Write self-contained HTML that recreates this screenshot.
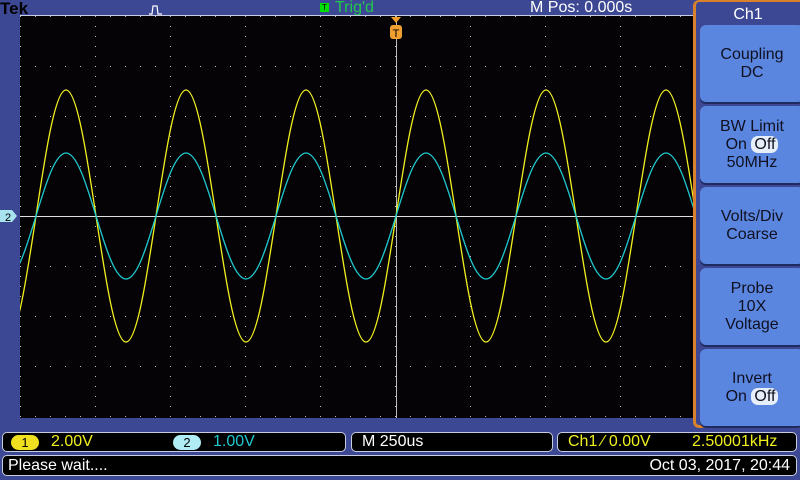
<!DOCTYPE html>
<html><head><style>
body{margin:0;width:800px;height:480px;background:#3d4894;overflow:hidden;position:relative;font-family:"Liberation Sans",sans-serif}
.t{position:absolute;white-space:nowrap}
.menu{position:absolute;left:693px;top:0;width:107px;height:428px;background:#3d4894;border-left:3px solid #d9822b;border-bottom:3px solid #d9822b;border-top:2px solid #d9822b;border-radius:6px 0 0 6px;box-sizing:border-box}
.btn{position:absolute;left:4px;width:104px;background:#5a86e0;border-radius:6px;color:#101020;font-size:16px;text-align:center;display:flex;flex-direction:column;justify-content:center;line-height:18px;box-shadow:0 2px 0 #1f2a60}
.off{background:#e6eef8;border-radius:7px;padding:0 3px}
.bar{position:absolute;background:#000;border:1px solid #c8cce0;border-radius:5px;box-sizing:border-box;font-size:16px}
.pill{display:inline-block;border-radius:9px;width:28px;height:15px;text-align:center;font-size:13px;line-height:15px;color:#000;vertical-align:middle}
</style></head><body>
<div class="t" style="left:0;top:-1px;font-size:17px;font-weight:bold;color:#000">Tek</div>
<svg class="t" style="left:148px;top:4px" width="22" height="12"><path d="M1 10H4L5 2H9L10 10H14" stroke="#fff" fill="none" stroke-width="1.2"/></svg>
<div class="t" style="left:320px;top:3px;width:9px;height:9px;background:#00e000;font-size:8px;line-height:9px;text-align:center;color:#000">T</div>
<div class="t" style="left:335px;top:-1px;font-size:16px;color:#22c84a">Trig'd</div>
<div class="t" style="left:530px;top:-1px;font-size:16px;color:#fff">M Pos: 0.000s</div>
<svg class="t" style="left:0;top:0" width="800" height="430">
<defs>
<pattern id="vd" x="20" y="16" width="75" height="10" patternUnits="userSpaceOnUse"><rect x="0" y="0" width="1" height="1" fill="#bbb"/></pattern>
<pattern id="hd" x="20" y="16" width="15" height="50" patternUnits="userSpaceOnUse"><rect x="0" y="0" width="1" height="1" fill="#bbb"/></pattern>
<clipPath id="c"><rect x="20" y="16" width="675" height="402"/></clipPath>
</defs>
<rect x="20" y="16" width="675" height="402" fill="#050305"/>
<rect x="20" y="16" width="675" height="402" fill="url(#vd)"/>
<rect x="20" y="16" width="675" height="402" fill="url(#hd)"/>
<line x1="20" y1="15.5" x2="695" y2="15.5" stroke="#c8cce0" stroke-width="1"/>
<line x1="396.5" y1="16" x2="396.5" y2="418" stroke="#bbb" stroke-width="1"/>
<line x1="20" y1="216.5" x2="695" y2="216.5" stroke="#e0e0e0" stroke-width="1"/>
<g clip-path="url(#c)" fill="none" stroke-width="1.3">
<path stroke="#f0f020" d="M-84 216 c9.78,-64.55 19.19,-126 30,-126 c10.81,0 20.22,61.45 30,126 c9.78,64.55 19.19,126 30,126 c10.81,0 20.22,-61.45 30,-126 c9.78,-64.55 19.19,-126 30,-126 c10.81,0 20.22,61.45 30,126 c9.78,64.55 19.19,126 30,126 c10.81,0 20.22,-61.45 30,-126 c9.78,-64.55 19.19,-126 30,-126 c10.81,0 20.22,61.45 30,126 c9.78,64.55 19.19,126 30,126 c10.81,0 20.22,-61.45 30,-126 c9.78,-64.55 19.19,-126 30,-126 c10.81,0 20.22,61.45 30,126 c9.78,64.55 19.19,126 30,126 c10.81,0 20.22,-61.45 30,-126 c9.78,-64.55 19.19,-126 30,-126 c10.81,0 20.22,61.45 30,126 c9.78,64.55 19.19,126 30,126 c10.81,0 20.22,-61.45 30,-126 c9.78,-64.55 19.19,-126 30,-126 c10.81,0 20.22,61.45 30,126 c9.78,64.55 19.19,126 30,126 c10.81,0 20.22,-61.45 30,-126 c9.78,-64.55 19.19,-126 30,-126 c10.81,0 20.22,61.45 30,126 c9.78,64.55 19.19,126 30,126 c10.81,0 20.22,-61.45 30,-126"/>
<path stroke="#20c8d0" d="M-84 216 c9.78,-32.27 19.19,-63 30,-63 c10.81,0 20.22,30.73 30,63 c9.78,32.27 19.19,63 30,63 c10.81,0 20.22,-30.73 30,-63 c9.78,-32.27 19.19,-63 30,-63 c10.81,0 20.22,30.73 30,63 c9.78,32.27 19.19,63 30,63 c10.81,0 20.22,-30.73 30,-63 c9.78,-32.27 19.19,-63 30,-63 c10.81,0 20.22,30.73 30,63 c9.78,32.27 19.19,63 30,63 c10.81,0 20.22,-30.73 30,-63 c9.78,-32.27 19.19,-63 30,-63 c10.81,0 20.22,30.73 30,63 c9.78,32.27 19.19,63 30,63 c10.81,0 20.22,-30.73 30,-63 c9.78,-32.27 19.19,-63 30,-63 c10.81,0 20.22,30.73 30,63 c9.78,32.27 19.19,63 30,63 c10.81,0 20.22,-30.73 30,-63 c9.78,-32.27 19.19,-63 30,-63 c10.81,0 20.22,30.73 30,63 c9.78,32.27 19.19,63 30,63 c10.81,0 20.22,-30.73 30,-63 c9.78,-32.27 19.19,-63 30,-63 c10.81,0 20.22,30.73 30,63 c9.78,32.27 19.19,63 30,63 c10.81,0 20.22,-30.73 30,-63"/>
</g>
<path d="M391 17H401L396 23Z" fill="#f0a030"/>
<rect x="390" y="25" width="12" height="14" rx="3" fill="#f0a030"/>
<text x="396" y="37" font-size="11" text-anchor="middle" fill="#000" font-family="Liberation Sans">T</text>
<path d="M0 210H12L17 216L12 222H0Z" fill="#a8e4f0"/>
<text x="5" y="221" font-size="11" fill="#000" font-family="Liberation Sans">2</text>
</svg>
<div class="menu">
<div class="t" style="left:0;width:104px;top:4px;text-align:center;color:#fff;font-size:16px">Ch1</div>
<div class="btn" style="top:23px;height:77px">Coupling<br>DC</div>
<div class="btn" style="top:104px;height:77px">BW Limit<br><span>On <span class="off">Off</span></span>50MHz</div>
<div class="btn" style="top:185px;height:77px">Volts/Div<br>Coarse</div>
<div class="btn" style="top:266px;height:77px">Probe<br>10X<br>Voltage</div>
<div class="btn" style="top:347px;height:77px">Invert<br><span>On <span class="off">Off</span></span></div>
</div>
<div class="bar" style="left:2px;top:432px;width:344px;height:20px">
<span class="t" style="left:8px;top:1px"><span class="pill" style="background:#f0e020">1</span></span>
<span class="t" style="left:48px;top:0px;color:#f0f020">2.00V</span>
<span class="t" style="left:170px;top:1px"><span class="pill" style="background:#b0ecf4">2</span></span>
<span class="t" style="left:210px;top:0px;color:#20c8d0">1.00V</span>
</div>
<div class="bar" style="left:351px;top:432px;width:202px;height:20px"><span class="t" style="left:10px;top:0px;color:#fff">M 250us</span></div>
<div class="bar" style="left:557px;top:432px;width:240px;height:20px">
<span class="t" style="left:10px;top:0px;color:#f0f020">Ch1 ⁄ 0.00V</span>
<span class="t" style="left:134px;top:0px;color:#f0f020">2.50001kHz</span></div>
<div class="bar" style="left:2px;top:455px;width:795px;height:21px">
<span class="t" style="left:5px;top:1px;color:#fff">Please wait....</span>
<span class="t" style="right:6px;top:1px;color:#fff">Oct 03, 2017, 20:44</span></div>
</body></html>
